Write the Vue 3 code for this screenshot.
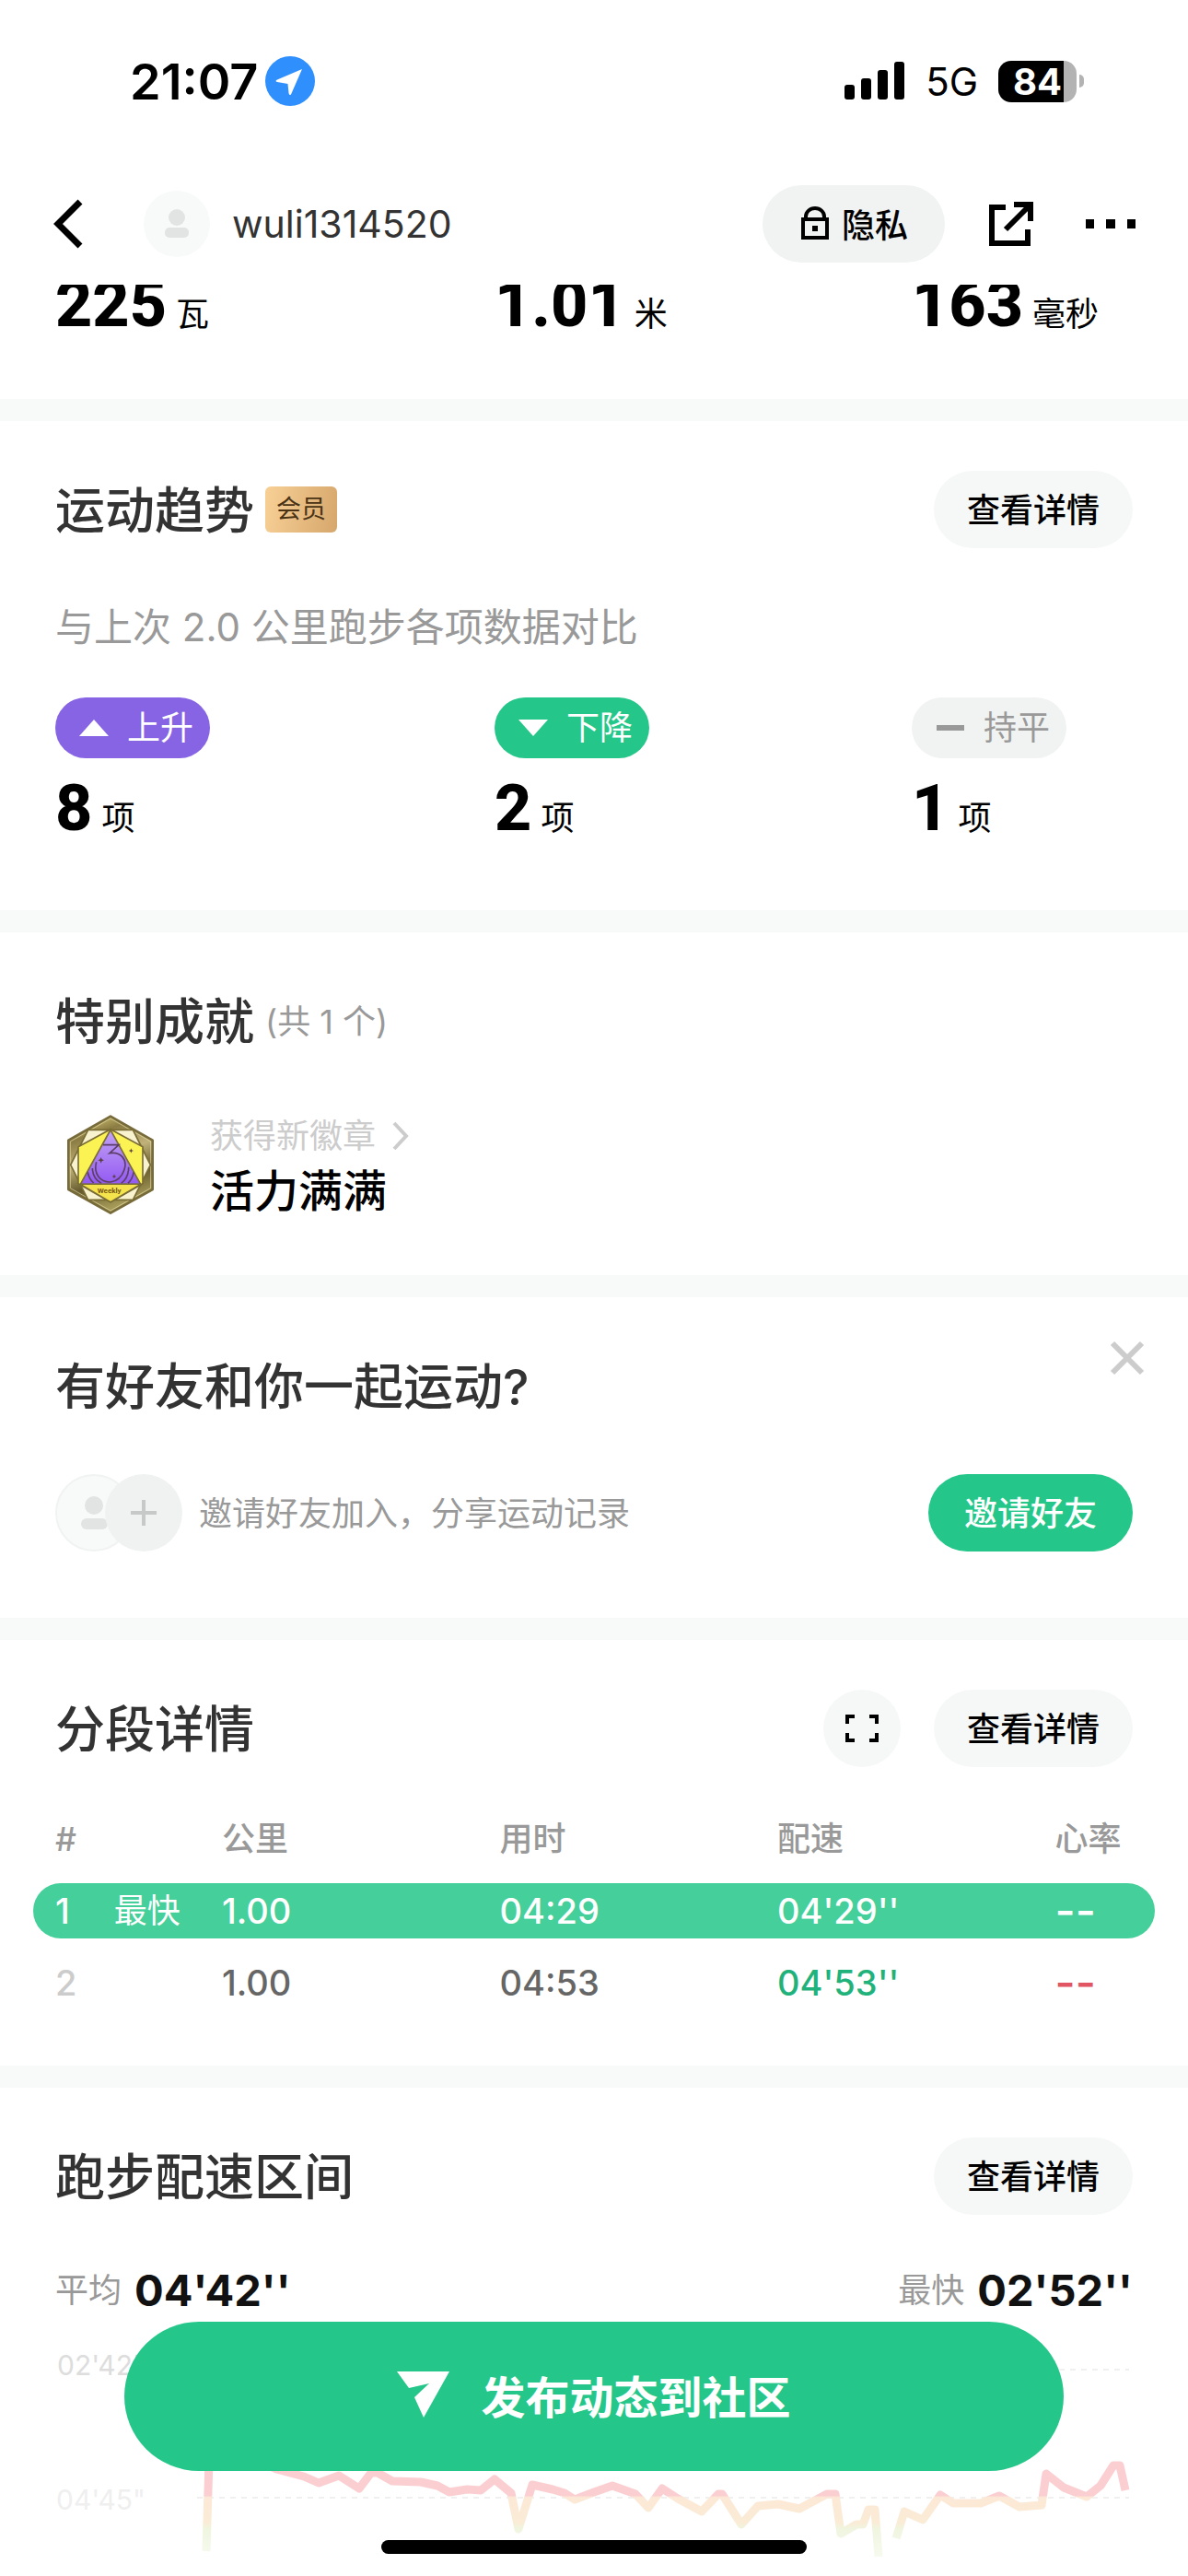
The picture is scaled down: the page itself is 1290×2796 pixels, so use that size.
<template>
  <div class="page">
    <header class="header">
      <div class="status">
        <div class="status-left">
          <span class="time">21:07</span>
          <svg class="locate" viewBox="0 0 54 54">
            <circle cx="27" cy="27" r="27" fill="#2f8ffc" />
            <path d="M40 14 28 41.500Q26 43 25.500 40L24.500 30 13 28Q10 27 13 25.500Z" fill="#fff" />
          </svg>
        </div>
        <div class="status-right">
          <svg class="signal" viewBox="0 0 66 42">
            <rect x="0" y="25" width="11" height="16" rx="3" />
            <rect x="18" y="18" width="11" height="23" rx="3" />
            <rect x="36" y="9" width="11" height="32" rx="3" />
            <rect x="54" y="0" width="11" height="41" rx="3" />
          </svg>
          <span class="network">5G</span>
          <div class="battery">
            <span class="battery-body">84</span>
            <span class="battery-nub"></span>
          </div>
        </div>
      </div>
      <nav class="nav">
        <button class="icon-btn" aria-label="返回">
          <svg class="back" viewBox="0 0 34 54">
            <path d="M30 3 6 27l24 24" fill="none" stroke="#000" stroke-width="7" />
          </svg>
        </button>
        <svg class="avatar" viewBox="0 0 72 72">
          <circle cx="36" cy="36" r="36" fill="#f8faf9" />
          <circle cx="36" cy="29" r="9" fill="#e2e4e3" />
          <rect x="23" y="40" width="26" height="11" rx="5" fill="#e2e4e3" />
        </svg>
        <span class="name">wuli1314520</span>
        <button class="privacy">
          <svg class="lock" viewBox="0 0 30 36">
            <path d="M5 13V11a10 9 0 0 1 20 0v2" fill="none" stroke="#000" stroke-width="4" />
            <rect x="2" y="14" width="26" height="20" fill="none" stroke="#000" stroke-width="4" />
            <rect x="12" y="21" width="6" height="6" />
          </svg>
          隐私
        </button>
        <button class="icon-btn share" aria-label="分享">
          <svg viewBox="0 0 48 48">
            <path d="M18 6H3v39h39V30" fill="none" stroke="#000" stroke-width="6" />
            <path d="M27 3h18v18M45 3 18 30" fill="none" stroke="#000" stroke-width="6" />
          </svg>
        </button>
        <button class="icon-btn more" aria-label="更多">
          <svg viewBox="0 0 54 10">
            <path d="M0 0h9v10H0zM22 0h10v10H22zM45 0h9v10h-9z" />
          </svg>
        </button>
      </nav>
    </header>

    <section class="metrics columns">
      <div v-for="item in metrics" :key="item.unit" class="figure">
        <b>{{ item.value }}</b><span>{{ item.unit }}</span>
      </div>
    </section>

    <section class="section trend">
      <div class="title-row">
        <h2>运动趋势</h2>
        <span class="vip">会员</span>
        <button class="detail">查看详情</button>
      </div>
      <p class="desc">与上次 2.0 公里跑步各项数据对比</p>
      <div class="columns">
        <div v-for="item in trends" :key="item.label">
          <div class="tag" :class="item.type">
            <svg viewBox="0 0 32 18">
              <path :d="item.icon" fill="currentColor" />
            </svg>
            {{ item.label }}
          </div>
          <div class="figure">
            <b>{{ item.count }}</b><span>项</span>
          </div>
        </div>
      </div>
    </section>

    <section class="section achieve">
      <div class="title-row">
        <h2>特别成就</h2>
        <span class="total">(共 1 个)</span>
      </div>
      <div class="medal-row">
        <svg class="medal" viewBox="31 41 360 360">
          <defs>
            <linearGradient id="rim" x1="0" y1="0" x2="0.300" y2="1">
              <stop offset="0" stop-color="#f3e58b" />
              <stop offset="0.250" stop-color="#8b7c43" />
              <stop offset="0.500" stop-color="#c0b279" />
              <stop offset="0.750" stop-color="#655a2d" />
              <stop offset="1" stop-color="#a59958" />
            </linearGradient>
            <linearGradient id="core" x1="0" y1="0" x2="0" y2="1">
              <stop offset="0" stop-color="#c3a5f4" />
              <stop offset="1" stop-color="#9359f3" />
            </linearGradient>
          </defs>
          <path d="M211 64 348 142V302L211 379 74 302V142Z" fill="url(#rim)" stroke="#776b3b" stroke-width="8" stroke-linejoin="round" />
          <path d="M211 71 342 146V298L211 371 80 298V146Z" fill="none" stroke="#e6dca6" stroke-width="2" />
          <path d="M138 108H284L341 222 284 336H138L81 222Z" fill="#f9f2cf" stroke="#796c35" stroke-width="5" />
          <path d="M211 106 316 163V283L211 343 106 283V163Z" fill="#fbf354" stroke="#796c35" stroke-width="5" />
          <path d="M211 108 309 285H113Z" fill="url(#core)" stroke="#796c35" stroke-width="5" />
          <g fill="none" stroke="#5c3f67" stroke-width="5">
            <path d="M187 157H238L208 184C245 178 265 205 257 234 250 258 234 275 211 278 177 279 155 251 165 213" />
            <path d="M152 233Q153 267 181 282M137 246Q140 266 156 281M270 229Q270 265 246 282M286 246Q283 268 268 282" />
          </g>
          <path d="M180 197l3 7 7 3-7 3-3 7-3-7-7-3 7-3zM278 168l2 6 6 2-6 2-2 6-2-6-6-2 6-2zM223 252l2 6 5 2-5 2-2 5-2-5-5-2 5-2z" fill="#5c3f40" />
          <path d="M113 285H309L211 343Z" fill="#f5e44b" stroke="#796c35" stroke-width="4" />
          <text x="207" y="314" text-anchor="middle" class="medal-text">Weekly</text>
        </svg>
        <div class="medal-info">
          <a class="medal-link" href="#">
            获得新徽章
            <svg viewBox="0 0 18 32">
              <path d="M2 2 15 16 2 30" fill="none" stroke="currentColor" stroke-width="4" />
            </svg>
          </a>
          <div class="medal-name">活力满满</div>
        </div>
      </div>
    </section>

    <section class="section friends">
      <div class="title-row">
        <h2>有好友和你一起运动?</h2>
      </div>
      <button class="icon-btn close" aria-label="关闭">
        <svg viewBox="0 0 38 38">
          <path d="M3 3 35 35M35 3 3 35" stroke="#ccc" stroke-width="6" />
        </svg>
      </button>
      <div class="invite-row">
        <svg class="pair" viewBox="0 0 138 84">
          <circle cx="42" cy="42" r="41" fill="#f8faf9" stroke="#f1f3f2" stroke-width="2" />
          <circle cx="42" cy="34" r="10" fill="#e2e4e3" />
          <rect x="28" y="48" width="29" height="12" rx="6" fill="#e2e4e3" />
          <circle cx="96" cy="42" r="42" fill="#f0f2f1" />
          <path d="M82 42h28M96 28v28" stroke="#c7c9c8" stroke-width="4" />
        </svg>
        <span class="invite-text">邀请好友加入，分享运动记录</span>
        <button class="invite">邀请好友</button>
      </div>
    </section>

    <section class="section laps">
      <div class="title-row">
        <h2>分段详情</h2>
        <button class="expand" aria-label="全屏">
          <svg viewBox="0 0 36 30">
            <path d="M10 2H2v8M26 2h8v8M2 20v8h8M34 20v8h-8" fill="none" stroke="#000" stroke-width="4" />
          </svg>
        </button>
        <button class="detail">查看详情</button>
      </div>
      <table>
        <thead>
          <tr>
            <th>#</th>
            <th>公里</th>
            <th>用时</th>
            <th>配速</th>
            <th>心率</th>
          </tr>
        </thead>
        <tbody>
          <tr v-for="lap in laps" :key="lap.no" :class="{ fastest: lap.fastest }">
            <td class="no">
              <div class="no-cell">
                <span>{{ lap.no }}</span>
                <small v-if="lap.fastest">最快</small>
              </div>
            </td>
            <td>{{ lap.km }}</td>
            <td>{{ lap.time }}</td>
            <td class="pace">{{ lap.pace }}</td>
            <td class="heart">{{ lap.heart }}</td>
          </tr>
        </tbody>
      </table>
    </section>

    <section class="section zone">
      <div class="title-row">
        <h2>跑步配速区间</h2>
        <button class="detail">查看详情</button>
      </div>
      <div class="pace-row">
        <div><span>平均</span><b>04'42''</b></div>
        <div><span>最快</span><b>02'52''</b></div>
      </div>
      <svg class="chart" viewBox="0 0 1170 262">
        <defs>
          <!-- 颜色按配速高低分三段 -->
          <linearGradient id="pace" gradientUnits="userSpaceOnUse" x1="0" y1="150" x2="0" y2="260">
            <stop offset="0.350" stop-color="#fbcfd1" />
            <stop offset="0.370" stop-color="#fce8d6" />
            <stop offset="0.620" stop-color="#faecd6" />
            <stop offset="0.680" stop-color="#eff5df" />
            <stop offset="1" stop-color="#f7fbf2" />
          </linearGradient>
        </defs>
        <g stroke="#f0f0f0" stroke-width="2" stroke-dasharray="6 6">
          <path d="M154 52H1166" />
          <path d="M154 191H1166" />
        </g>
        <text x="2" y="58" fill="#ddd">02'42"</text>
        <text x="1" y="204" fill="#efefef">04'45"</text>
        <g fill="none" stroke="url(#pace)" stroke-width="9" stroke-linejoin="round">
          <polyline v-for="line in lines" :key="line" :points="line" />
        </g>
      </svg>
    </section>

    <button class="publish">
      <svg viewBox="0 0 57 50">
        <path d="M0 0H57L29 50 19 28 35 13 13 18Z" fill="#fff" />
      </svg>
      发布动态到社区
    </button>
    <div class="home-bar"></div>
  </div>
</template>

<script setup>
const metrics = [
  { value: "225", unit: "瓦" },
  { value: "1.01", unit: "米" },
  { value: "163", unit: "毫秒" },
];

const trends = [
  { type: "up", label: "上升", count: 8, icon: "M0 18 16 0 32 18Z" },
  { type: "down", label: "下降", count: 2, icon: "M0 0H32L16 18Z" },
  { type: "flat", label: "持平", count: 1, icon: "M1 6H31V12H1Z" },
];

const laps = [
  { no: 1, km: "1.00", time: "04:29", pace: "04'29''", heart: "--", fastest: true },
  { no: 2, km: "1.00", time: "04:53", pace: "04'53''", heart: "--" },
];

// 配速曲线
const lines = [
  "164,249 167,150 200,140 240,160 255,164 270,168 286,175 308,167 330,181 343,164 350,164 366,173 397,174 415,178 428,185 447,182 462,183 477,171 495,186 503,225 518,177 540,182 553,186 564,193 585,185 605,178 630,187 644,202 659,181 676,192 702,206 720,187 724,187 745,220 763,200 785,198 808,203 838,187 847,187 853,230 870,220 877,220 883,204 890,204 894,255",
  "913,235 922,206 942,215 961,188 975,197 1005,197 1025,189 1047,201 1071,199 1076,165 1095,180 1120,190 1135,178 1149,156 1156,156 1162,183",
];
</script>

<style>
body {
  background: #fff;
}
</style>

<style scoped>
.page {
  font-family: Inter, "Noto Sans CJK SC", sans-serif;
  font-size: 36px;
  color: #000;
}

button {
  font: inherit;
  color: inherit;
  border: 0;
  padding: 0;
  background: none;
  cursor: pointer;
}

svg {
  display: block;
  flex: none;
}

.icon-btn {
  display: flex;
}

/* 顶部 */
.header {
  position: sticky;
  top: 0;
  z-index: 2;
  background: #fff;
  padding: 48px 57px 24px;
}

.status {
  display: flex;
  justify-content: space-between;
  align-items: center;
  height: 80px;
  padding: 0 56px 0 84px;
}

.status-left,
.status-right {
  display: flex;
  align-items: center;
}

.status-left {
  gap: 8px;
}

.time {
  font-size: 54px;
  font-weight: 600;
}

.locate {
  width: 54px;
  height: 54px;
}

.signal {
  width: 66px;
  height: 42px;
}

.network {
  margin: 0 22px;
  font-size: 42px;
}

.battery {
  display: flex;
  align-items: center;
  gap: 3px;
}

.battery-body {
  width: 85px;
  height: 45px;
  line-height: 45px;
  border-radius: 14px;
  text-align: center;
  font-size: 40px;
  font-weight: 700;
  color: #fff;
  background: linear-gradient(90deg, #000 84%, #b3b3b3 84%);
}

.battery-nub {
  width: 5px;
  height: 14px;
  border-radius: 0 5px 5px 0;
  background: #b3b3b3;
}

.nav {
  display: flex;
  align-items: center;
  height: 84px;
  margin-top: 73px;
}

.back {
  width: 34px;
  height: 54px;
}

.avatar {
  width: 72px;
  height: 72px;
  margin: 0 24px 0 65px;
}

.name {
  flex: 1;
  font-size: 41px;
  color: #333;
}

.privacy {
  display: flex;
  align-items: center;
  gap: 14px;
  height: 84px;
  padding: 0 40px 2px 42px;
  border-radius: 42px;
  background: #f1f3f2;
  font-weight: 500;
}

.lock {
  width: 30px;
  height: 36px;
}

.share {
  margin: 0 57px 0 48px;
}

.share svg {
  width: 48px;
  height: 48px;
}

.more svg {
  width: 54px;
  height: 10px;
}

/* 数据列 */
.columns {
  display: grid;
  grid-template-columns: 477fr 453fr 240fr;
}

.metrics {
  margin-top: -21px;
  padding: 0 60px 61px;
}

.figure {
  display: flex;
  align-items: baseline;
  gap: 10px;
  height: 84px;
  line-height: 84px;
}

.figure b {
  font-family: Roboto, sans-serif;
  font-size: 70px;
  font-weight: 800;
}

/* 分区 */
.section {
  position: relative;
  padding: 54px 60px 0;
  border-top: 24px solid #f8faf9;
}

.title-row {
  display: flex;
  align-items: center;
  height: 84px;
}

h2 {
  margin: 0;
  padding-bottom: 6px;
  font-size: 54px;
  font-weight: 500;
  color: #333;
}

.detail {
  width: 216px;
  height: 84px;
  margin-left: auto;
  padding-bottom: 4px;
  border-radius: 42px;
  background: #f6f8f7;
  font-weight: 500;
}

.trend {
  padding-bottom: 69px;
}

.vip {
  width: 78px;
  height: 50px;
  line-height: 50px;
  margin-left: 12px;
  border-radius: 6px;
  text-align: center;
  font-size: 27px;
  color: #4a3315;
  background: linear-gradient(100deg, #f8d096, #d6a76c);
}

.desc {
  margin: 56px 0 46px;
  font-size: 42px;
  line-height: 60px;
  color: #999;
}

.tag {
  display: inline-flex;
  align-items: center;
  gap: 20px;
  height: 66px;
  padding: 0 18px 0 26px;
  border-radius: 33px;
  line-height: 64px;
  color: #fff;
}

.tag svg {
  width: 32px;
  height: 18px;
}

.tag + .figure {
  margin-top: 12px;
}

.up {
  background: #8764e4;
}

.down {
  background: #24c789;
}

.flat {
  background: #f1f3f2;
  color: #999;
}

/* 成就 */
.achieve {
  padding-bottom: 60px;
}

.total {
  margin-left: 12px;
  padding-bottom: 4px;
  color: #999;
}

.medal-row {
  display: flex;
  align-items: center;
  gap: 48px;
  height: 120px;
  margin-top: 54px;
}

.medal {
  width: 120px;
  height: 120px;
}

.medal-text {
  font: 700 24px Roboto, sans-serif;
  fill: #795a18;
}

.medal-info {
  padding-top: 10px;
}

.medal-link {
  display: flex;
  align-items: center;
  gap: 18px;
  line-height: 48px;
  color: #ccc;
  text-decoration: none;
}

.medal-link svg {
  width: 18px;
  height: 32px;
}

.medal-name {
  font-size: 48px;
  line-height: 72px;
  font-weight: 500;
}

/* 邀请 */
.friends {
  padding-bottom: 72px;
}

.close {
  position: absolute;
  top: 47px;
  right: 47px;
}

.close svg {
  width: 38px;
  height: 38px;
}

.invite-row {
  display: flex;
  align-items: center;
  margin-top: 54px;
}

.pair {
  width: 138px;
  height: 84px;
}

.invite-text {
  flex: 1;
  margin-left: 18px;
  padding-bottom: 4px;
  color: #999;
}

.invite {
  width: 222px;
  height: 84px;
  padding-bottom: 4px;
  border-radius: 42px;
  background: #24c789;
  color: #fff;
  font-weight: 500;
}

/* 分段 */
.laps {
  padding: 54px 36px 42px;
}

.laps .title-row {
  padding: 0 24px;
}

.expand {
  display: flex;
  align-items: center;
  justify-content: center;
  width: 84px;
  height: 84px;
  margin-left: auto;
  border-radius: 50%;
  background: #f6f8f7;
}

.expand svg {
  width: 36px;
  height: 30px;
}

.expand + .detail {
  margin-left: 36px;
}

table {
  width: 100%;
  margin-top: 30px;
  table-layout: fixed;
  border-collapse: separate;
  border-spacing: 0 18px;
}

th,
td {
  height: 60px;
  padding: 0;
  line-height: 60px;
  text-align: left;
}

th {
  width: 25%;
  font-weight: 500;
  color: #999;
}

th:first-child {
  width: 17%;
}

th:last-child {
  width: 9%;
}

th:first-child,
td:first-child {
  padding-left: 24px;
  box-sizing: border-box;
}

td {
  font-size: 38px;
  font-weight: 500;
  color: #666;
}

.no {
  color: #ccc;
}

.no-cell {
  display: flex;
  gap: 48px;
}

.no-cell small {
  font-size: 36px;
  font-weight: 400;
}

.pace {
  color: #1fb27a;
}

.heart {
  font-size: 48px;
  color: #e25563;
}

.fastest td {
  background: #45cf9b;
  color: #fff;
}

.fastest td:first-child {
  border-radius: 30px 0 0 30px;
}

.fastest td:last-child {
  border-radius: 0 30px 30px 0;
}

/* 配速区间 */
.pace-row {
  display: flex;
  justify-content: space-between;
  height: 68px;
  margin-top: 48px;
  line-height: 68px;
}

.pace-row div {
  display: flex;
  align-items: center;
  gap: 14px;
}

.pace-row span {
  color: #999;
}

.pace-row b {
  font-size: 47px;
  color: #111;
}

.chart {
  width: 100%;
}

.chart text {
  font-size: 30px;
}

.publish {
  position: fixed;
  left: 135px;
  right: 135px;
  bottom: 114px;
  z-index: 3;
  display: flex;
  align-items: center;
  justify-content: center;
  gap: 34px;
  height: 162px;
  padding-bottom: 4px;
  border-radius: 81px;
  background: #24c789;
  color: #fff;
  font-size: 48px;
  font-weight: 700;
}

.publish svg {
  width: 57px;
  height: 50px;
}

.home-bar {
  position: fixed;
  left: 50%;
  bottom: 24px;
  z-index: 3;
  width: 462px;
  height: 15px;
  margin-left: -231px;
  border-radius: 8px;
  background: #000;
}
</style>
